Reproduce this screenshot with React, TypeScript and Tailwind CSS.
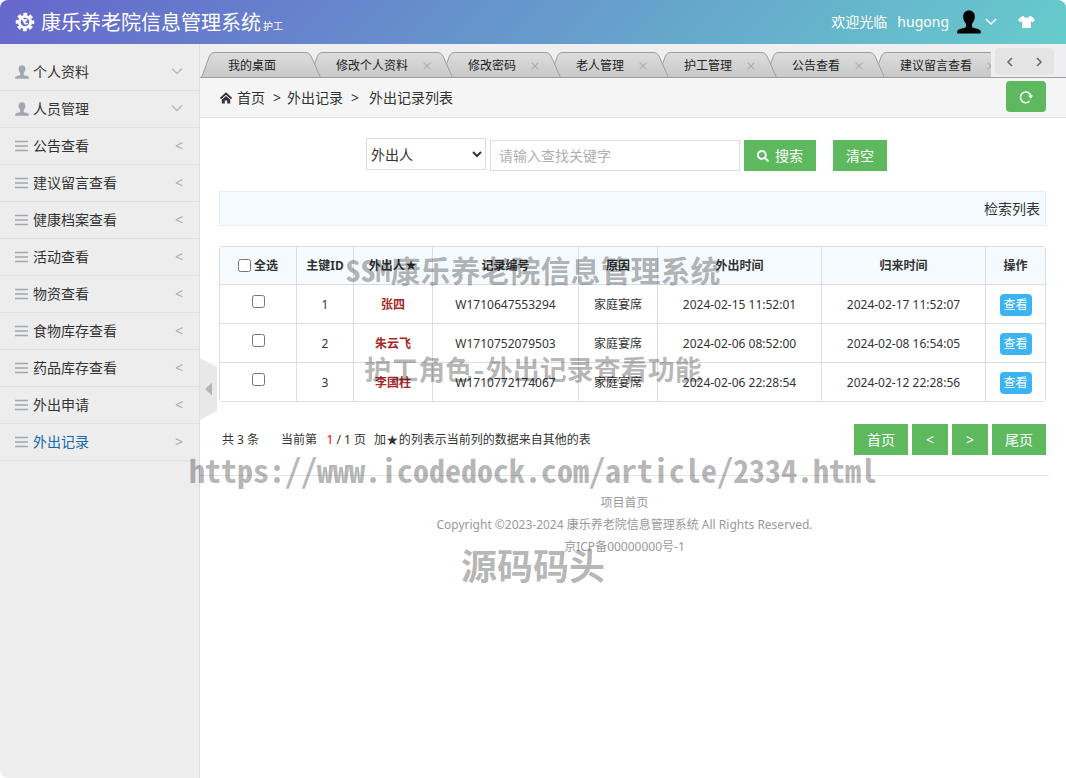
import { useState } from "react";
import { FaSearch } from "react-icons/fa";

interface MenuItem {
  name: string;
  kind: "user" | "list";
  active?: boolean;
}

interface LeaveRecord {
  id: number;
  person: string;
  code: string;
  reason: string;
  leaveTime: string;
  returnTime: string;
}

const menuItems: MenuItem[] = [
  { name: "个人资料", kind: "user" },
  { name: "人员管理", kind: "user" },
  { name: "公告查看", kind: "list" },
  { name: "建议留言查看", kind: "list" },
  { name: "健康档案查看", kind: "list" },
  { name: "活动查看", kind: "list" },
  { name: "物资查看", kind: "list" },
  { name: "食物库存查看", kind: "list" },
  { name: "药品库存查看", kind: "list" },
  { name: "外出申请", kind: "list" },
  { name: "外出记录", kind: "list", active: true },
];

const tabs = ["我的桌面", "修改个人资料", "修改密码", "老人管理", "护工管理", "公告查看", "建议留言查看"];

const records: LeaveRecord[] = [
  { id: 1, person: "张四", code: "W1710647553294", reason: "家庭宴席", leaveTime: "2024-02-15 11:52:01", returnTime: "2024-02-17 11:52:07" },
  { id: 2, person: "朱云飞", code: "W1710752079503", reason: "家庭宴席", leaveTime: "2024-02-06 08:52:00", returnTime: "2024-02-08 16:54:05" },
  { id: 3, person: "李国柱", code: "W1710772174067", reason: "家庭宴席", leaveTime: "2024-02-06 22:28:54", returnTime: "2024-02-12 22:28:56" },
];

function GearIcon() {
  return (
    <svg className="h-5 w-5" viewBox="0 0 20 20" fill="none" stroke="currentColor" aria-hidden="true">
      <circle cx="10" cy="10" r="7.8" strokeWidth="3" strokeDasharray="3.7 2.426" strokeDashoffset="1.85" />
      <circle cx="10" cy="10" r="5.7" strokeWidth="2.800" />
      <path d="M6 5.500l4.500 4.700" strokeWidth="2" />
      <path d="M12.300 8.300a2 2 0 1 0 .3 2.700" strokeWidth="1.400" />
    </svg>
  );
}

function UserIcon({ className }: { className: string }) {
  return (
    <svg className={className} viewBox="0 0 24 24" fill="currentColor" aria-hidden="true">
      <path d="M12 .5c3.600 0 5.800 2.400 5.800 6 0 2.900-1 5.500-2.800 7.200v2.600c0 1 .8 1.500 2 1.800 3 .7 6.300 1.400 6.800 3.300.3 1.300-.1 2.100-1 2.100H1.200c-.9 0-1.300-.8-1-2.100.5-1.900 3.800-2.600 6.800-3.300 1.200-.3 2-.8 2-1.800v-2.600C7.200 12 6.200 9.400 6.200 6.500c0-3.600 2.200-6 5.800-6z" />
    </svg>
  );
}

function ListIcon() {
  return (
    <svg className="h-3 w-3.5" viewBox="0 0 14 12" stroke="currentColor" aria-hidden="true">
      <path d="M0 1.500h13M0 6h13M0 10.500h13" strokeWidth="1.500" />
    </svg>
  );
}

function ChevronIcon({ className, d }: { className: string; d: string }) {
  return (
    <svg className={className} viewBox="0 0 12 12" fill="none" stroke="currentColor" aria-hidden="true">
      <path d={d} strokeWidth="1.500" />
    </svg>
  );
}

function ShirtIcon() {
  return (
    <svg className="h-4 w-[17px]" viewBox="0 0 17 16" fill="currentColor" aria-hidden="true">
      <path d="M5.500 2c.8 1.300 1.700 1.800 3 1.800s2.200-.5 3-1.800l2.300.5L17 6l-2.300 2.300-1.700-1V14H4V7.300L2.300 8.300 0 6l3.200-3.500z" />
    </svg>
  );
}

function HomeIcon() {
  return (
    <svg className="h-3 w-3" viewBox="0 0 12 12" aria-hidden="true">
      <path d="M.5 6.500L6 1.500l5.500 5" fill="none" stroke="currentColor" strokeWidth="1.800" />
      <path d="M6 4l4.200 3.700V11.500H7.200V8.500H4.800v3h-3V7.700z" fill="currentColor" />
    </svg>
  );
}

function RefreshIcon() {
  return (
    <svg className="h-3.5 w-3.5" viewBox="0 0 14 14" aria-hidden="true">
      <path d="M10.500 11.300A5.400 5.400 0 1 1 12.100 6" fill="none" stroke="currentColor" strokeWidth="1.500" />
      <path d="M9 5.500h5l-2.200 3.200z" fill="currentColor" />
    </svg>
  );
}

function Star() {
  return <span className="font-['DejaVu_Sans'] text-sm leading-none">★</span>;
}

function Tab({ name, closable, order }: { name: string; closable: boolean; order: number }) {
  const width = name.length * 12 + 60;
  const right = width + 12;
  const shape = `M0.500 25.500L8.500 4Q10 .5 13 .5H${right - 15}Q${right - 12} .5 ${right - 10} 4L${right - 0.5} 25.500`;

  return (
    <li className="relative flex shrink-0 items-center pt-0.5 pl-[21px]" style={{ width, zIndex: order }}>
      <svg className="absolute top-0 -left-1.5" width={right} height="26" viewBox={`0 0 ${right} 26`} aria-hidden="true">
        <defs>
          <linearGradient id={`tab-${order}`} x1="0" y1="0" x2="0" y2="1">
            <stop offset="0" stopColor="#dcdddd" />
            <stop offset="1" stopColor="#c8c8c9" />
          </linearGradient>
        </defs>
        <path d={shape} fill={`url(#tab-${order})`} stroke="#9d9d9d" />
      </svg>
      <a href="#" className="relative whitespace-nowrap text-xs text-[#222]">{name}</a>
      {closable && (
        <button type="button" aria-label={`关闭${name}`} className="relative ml-3.5 text-[#aab0b5]">
          <ChevronIcon className="h-2.5 w-2.5" d="M2 2l8 8M10 2l-8 8" />
        </button>
      )}
    </li>
  );
}

function Sidebar() {
  return (
    <aside className="w-[200px] shrink-0 border-r border-[#dfdfdf] bg-[#ededed] pt-2.5">
      <ul>
        {menuItems.map((item) => (
          <li key={item.name} className="border-b border-[#e0e0e0]">
            <a
              href="#"
              className={`flex h-9 items-center pr-4 pl-[15px] text-sm ${item.active ? "text-[#1467b3]" : "text-[#333]"}`}
            >
              <span className="mr-1 w-3.5 text-[#a0a7b0]">
                {item.kind === "user" ? <UserIcon className="h-3.5 w-3.5" /> : <ListIcon />}
              </span>
              <span className="flex-1">{item.name}</span>
              <span className="text-[#aaa]">
                {item.kind === "user" ? (
                  <ChevronIcon className="h-3 w-3 text-[#b8b8b8]" d="M1 2.500l5 5 5-5" />
                ) : (
                  <span>{item.active ? ">" : "<"}</span>
                )}
              </span>
            </a>
          </li>
        ))}
      </ul>
    </aside>
  );
}

function RecordTable() {
  const [selected, setSelected] = useState<number[]>([]);
  const allSelected = selected.length === records.length;

  function toggle(id: number) {
    setSelected(selected.includes(id) ? selected.filter((s) => s !== id) : [...selected, id]);
  }

  return (
    <div className="mt-5 overflow-hidden rounded-sm">
      <table className="w-full table-fixed border-collapse text-center text-xs [&_td]:border [&_td]:border-[#ddd] [&_td]:pt-0.5 [&_th]:border [&_th]:border-[#ddd]">
        <colgroup>
          <col className="w-[77px]" />
          <col className="w-[57px]" />
          <col className="w-[79px]" />
          <col className="w-[146px]" />
          <col className="w-[79px]" />
          <col className="w-[164px]" />
          <col className="w-[164px]" />
          <col className="w-[60px]" />
        </colgroup>
        <thead>
          <tr className="h-[38px] bg-[#f5fafe] whitespace-nowrap">
            <th>
              <label className="flex items-center justify-center gap-[3px]">
                <input
                  type="checkbox"
                  className="h-[13px] w-[13px]"
                  checked={allSelected}
                  onChange={() => setSelected(allSelected ? [] : records.map((r) => r.id))}
                />
                全选
              </label>
            </th>
            <th>主键ID</th>
            <th>
              外出人
              <Star />
            </th>
            <th>记录编号</th>
            <th>原因</th>
            <th>外出时间</th>
            <th>归来时间</th>
            <th>操作</th>
          </tr>
        </thead>
        <tbody>
          {records.map((record) => (
            <tr key={record.id} className="h-[39px]">
              <td>
                <input
                  type="checkbox"
                  aria-label={`选择${record.person}`}
                  className="mb-2 h-[13px] w-[13px] align-middle"
                  checked={selected.includes(record.id)}
                  onChange={() => toggle(record.id)}
                />
              </td>
              <td>{record.id}</td>
              <td className="font-bold text-[#a52a2a]">{record.person}</td>
              <td>{record.code}</td>
              <td>{record.reason}</td>
              <td>{record.leaveTime}</td>
              <td>{record.returnTime}</td>
              <td>
                <button type="button" className="h-[22px] w-8 rounded bg-[#3bb4f2] text-xs text-white">查看</button>
              </td>
            </tr>
          ))}
        </tbody>
      </table>
    </div>
  );
}

function Watermark() {
  return (
    <div className="pointer-events-none absolute inset-x-0 top-[219px] z-20 flex flex-col items-center whitespace-nowrap font-['Noto_Sans_Mono_CJK_SC','Liberation_Mono','Noto_Sans_CJK_SC',monospace] font-bold text-black/30">
      <p className="flex h-[100px] items-center text-[30px]">SSM康乐养老院信息管理系统</p>
      <p className="flex h-[100px] items-center text-[27px]">护工角色-外出记录查看功能</p>
      <p className="flex h-[100px] items-center text-[32px]">https://www.icodedock.com/article/2334.html</p>
      <p className="flex h-[90px] items-center text-[36px]">源码码头</p>
    </div>
  );
}

export default function App() {
  const [field, setField] = useState("person");
  const [keyword, setKeyword] = useState("");

  return (
    <div className="relative flex min-h-screen flex-col overflow-hidden rounded-lg bg-white font-['Noto_Sans','Noto_Sans_CJK_SC',sans-serif] text-[#333]">
      <header className="flex h-11 items-center bg-[linear-gradient(135deg,#6666cc,#66cccc)] pr-[31px] pl-[15px] text-white">
        <GearIcon />
        <h1 className="ml-1.5 pt-0.5 text-xl">康乐养老院信息管理系统</h1>
        <span className="mt-2 ml-0.5 text-[10px]">护工</span>
        <div className="ml-auto flex items-center text-sm">
          <span>欢迎光临</span>
          <button type="button" className="ml-2.5 flex items-center">
            hugong
            <UserIcon className="mr-1 ml-2 h-6 w-6 text-black" />
            <ChevronIcon className="h-3 w-3" d="M1 3l5 5 5-5" />
          </button>
          <button type="button" aria-label="换肤" className="ml-[21px]">
            <ShirtIcon />
          </button>
        </div>
      </header>

      <div className="flex flex-1">
        <Sidebar />
        <main className="min-w-0 flex-1">
          <div className="flex h-[34px] border-b border-[#9d9d9d] bg-[#efeef0]">
            <ul className="isolate flex min-w-0 flex-1 overflow-hidden pt-2 pl-[7px]">
              {tabs.map((name, i) => (
                <Tab key={name} name={name} closable={i > 0} order={tabs.length - i} />
              ))}
            </ul>
            <div className="mt-1 mr-3 ml-1 flex h-[27px] w-[59px] items-center justify-around rounded bg-[#e4e4e5] text-[#666]">
              <button type="button" aria-label="向左">
                <ChevronIcon className="h-3 w-3" d="M8 2L4 6l4 4" />
              </button>
              <button type="button" aria-label="向右">
                <ChevronIcon className="h-3 w-3" d="M4 2l4 4-4 4" />
              </button>
            </div>
          </div>

          <nav className="flex h-10 items-center border-b border-[#e5e5e5] bg-[#f5f5f5] px-5 text-sm">
            <HomeIcon />
            <a href="#" className="ml-[5px]">首页</a>
            <span className="mr-1.5 ml-2">&gt;</span>
            <span>外出记录</span>
            <span className="mr-2.5 ml-2">&gt;</span>
            <span>外出记录列表</span>
            <button type="button" aria-label="刷新" className="mb-0.5 ml-auto flex h-[31px] w-10 items-center justify-center rounded bg-[#5eb95e] text-white">
              <RefreshIcon />
            </button>
          </nav>

          <div className="pt-5 pr-5 pl-[19px]">
            <form className="flex h-[33px] items-end justify-center pr-3 text-sm" onSubmit={(e) => e.preventDefault()}>
              <select
                aria-label="查找字段"
                value={field}
                onChange={(e) => setField(e.target.value)}
                className="h-8 w-[120px] self-start border border-[#ddd] bg-white"
              >
                <option value="person">外出人</option>
                <option value="code">记录编号</option>
              </select>
              <input
                type="text"
                aria-label="关键字"
                value={keyword}
                onChange={(e) => setKeyword(e.target.value)}
                placeholder="请输入查找关键字"
                className="ml-1 h-[31px] w-[250px] border border-[#ddd] px-2 placeholder:text-[#b0b0b0]"
              />
              <button type="submit" className="ml-1 flex h-[31px] w-[72px] items-center justify-center gap-1.5 bg-[#5eb95e] text-white">
                <FaSearch className="h-3 w-3" />
                搜索
              </button>
              <button type="button" onClick={() => setKeyword("")} className="ml-[17px] h-[31px] w-[54px] bg-[#5eb95e] text-white">
                清空
              </button>
            </form>

            <div className="mt-5 flex h-[35px] items-center justify-end border border-[#e8edf0] bg-[#f5fafe] pr-[5px] text-sm">检索列表</div>

            <RecordTable />

            <div className="mt-[22px] flex items-center text-xs">
              <span className="ml-[3px]">共 3 条</span>
              <span className="ml-[22px]">
                当前第&nbsp;&nbsp; <span className="text-[#f00]">1</span> / 1 页
              </span>
              <span className="ml-2 flex items-center">
                加<Star />的列表示当前列的数据来自其他的表
              </span>
              <div className="ml-auto flex gap-1 text-sm text-white">
                <button type="button" className="h-[31px] w-[54px] bg-[#5eb95e]">首页</button>
                <button type="button" className="h-[31px] w-9 bg-[#5eb95e]">&lt;</button>
                <button type="button" className="h-[31px] w-9 bg-[#5eb95e]">&gt;</button>
                <button type="button" className="h-[31px] w-[54px] bg-[#5eb95e]">尾页</button>
              </div>
            </div>
          </div>

          <footer className="mt-5 mr-[17px] border-t border-[#e5e5e5] pt-4 text-center text-xs leading-[22px] text-[#999]">
            <p>
              <a href="#">项目首页</a>
            </p>
            <p>Copyright ©2023-2024 康乐养老院信息管理系统 All Rights Reserved.</p>
            <p>京ICP备00000000号-1</p>
          </footer>
        </main>
      </div>

      {/* sidebar collapse handle */}
      <button type="button" aria-label="收起菜单" className="absolute top-1/2 left-[200px] z-10 -translate-y-1/2">
        <svg width="17" height="62" viewBox="0 0 17 62" aria-hidden="true">
          <path d="M0 0l17 9v44L0 62z" fill="#e8e8e8" />
          <path d="M12 24.500v13L5 31z" fill="#b5b5b5" />
        </svg>
      </button>

      <Watermark />
    </div>
  );
}
